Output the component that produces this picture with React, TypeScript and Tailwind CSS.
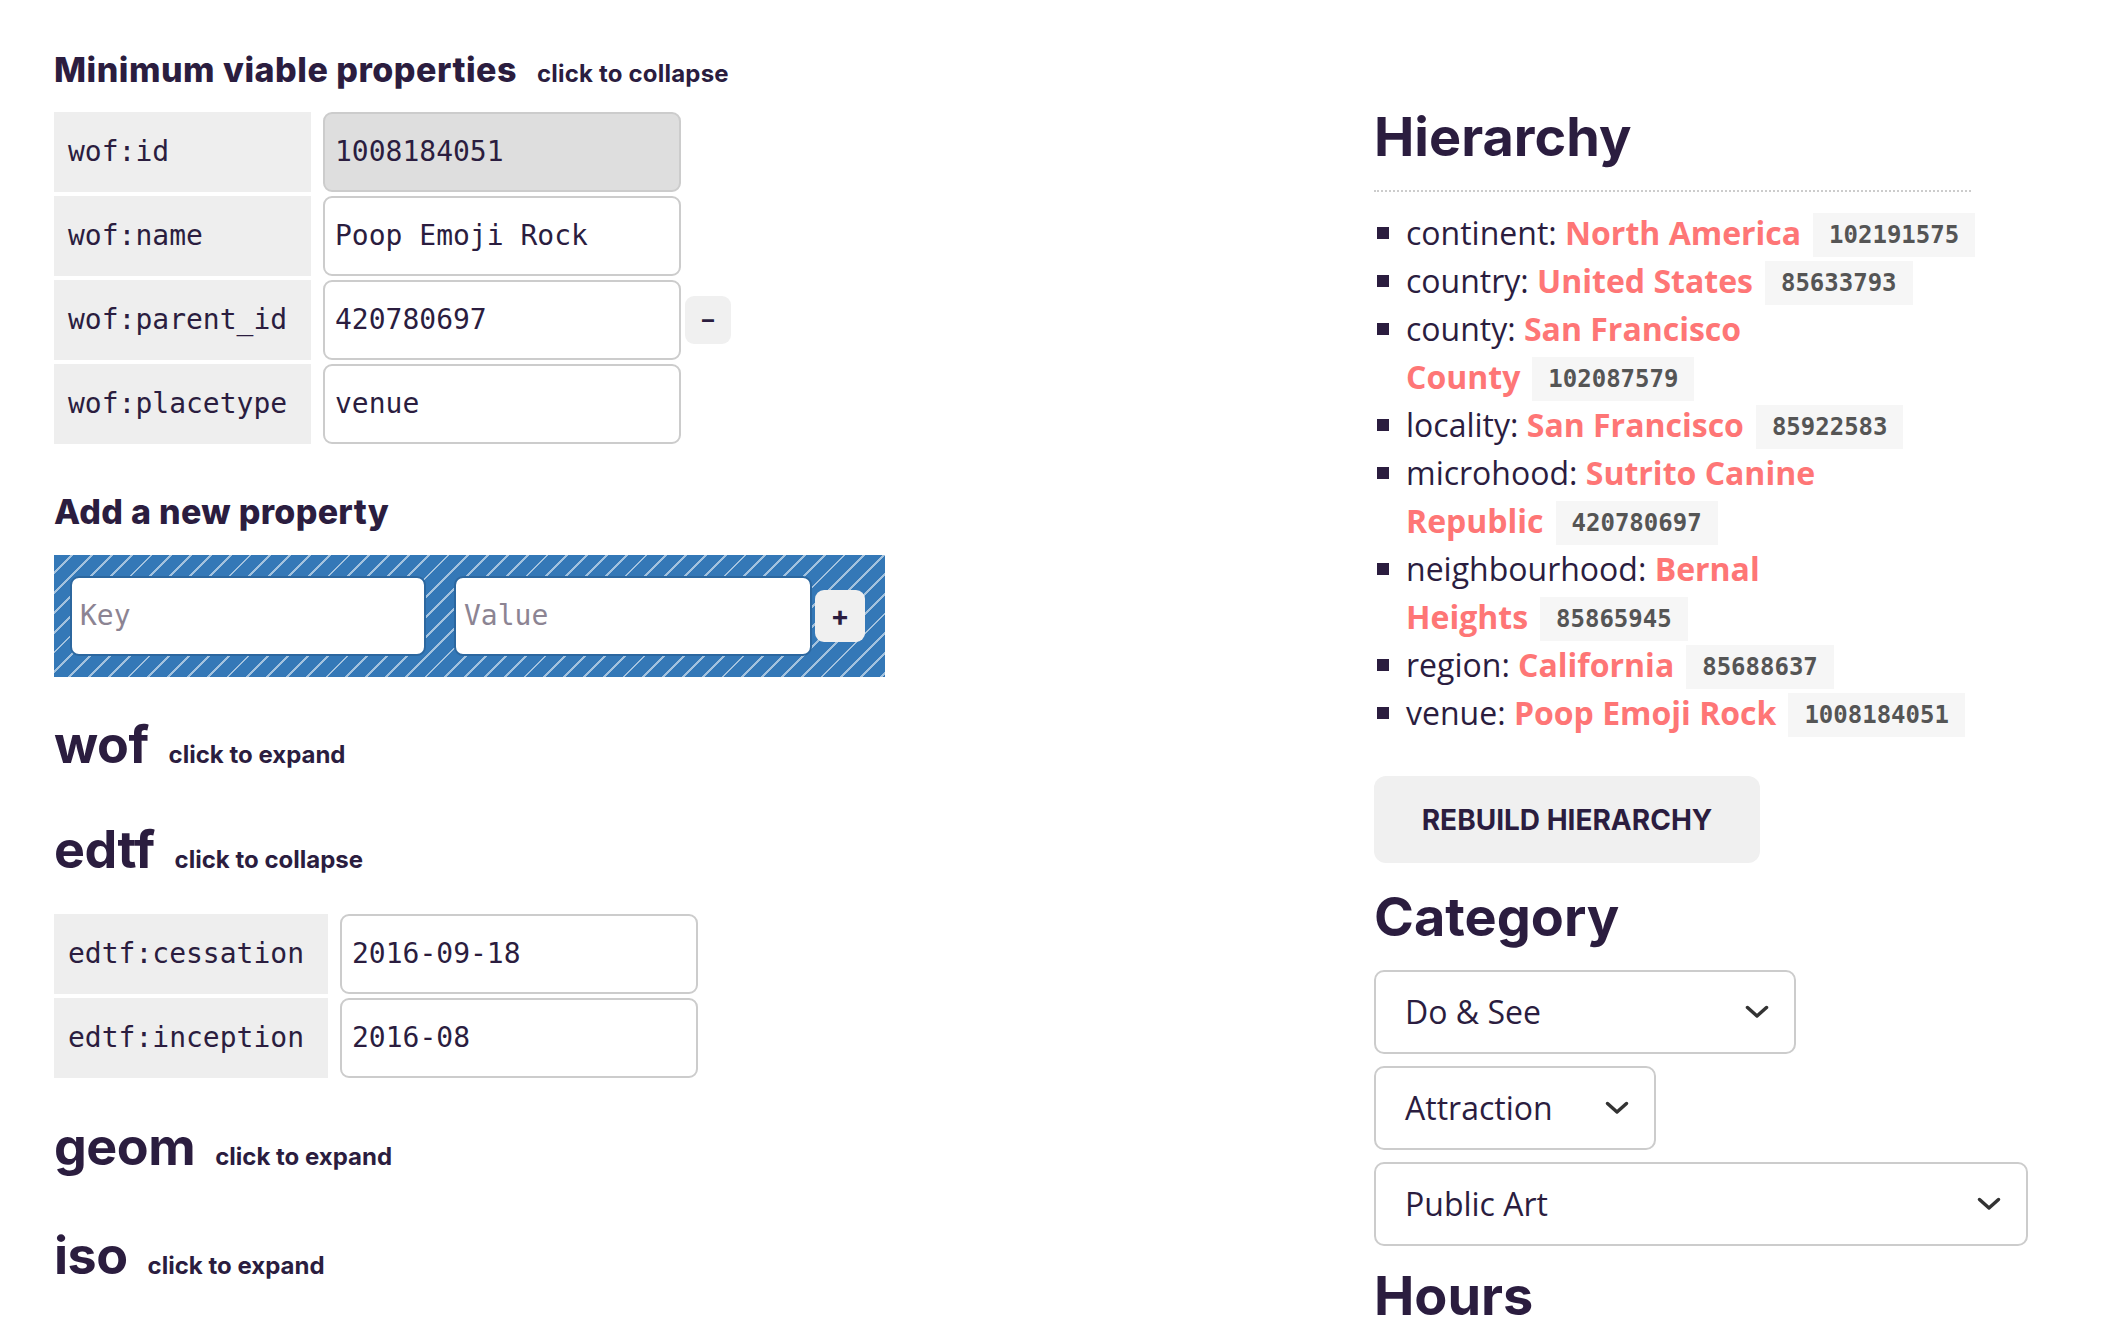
const ink = "text-[#2b1d3f]";

interface Place {
  type: string;
  name: string;
  id: string;
}

const hierarchy: Place[] = [
  { type: "continent", name: "North America", id: "102191575" },
  { type: "country", name: "United States", id: "85633793" },
  { type: "county", name: "San Francisco County", id: "102087579" },
  { type: "locality", name: "San Francisco", id: "85922583" },
  { type: "microhood", name: "Sutrito Canine Republic", id: "420780697" },
  { type: "neighbourhood", name: "Bernal Heights", id: "85865945" },
  { type: "region", name: "California", id: "85688637" },
  { type: "venue", name: "Poop Emoji Rock", id: "1008184051" },
];

const mono = "font-['DejaVu_Sans_Mono',monospace]";
const head = "font-['Inter',sans-serif] font-bold";
const body = "font-['Open_Sans',sans-serif]";

function PropRow({
  label,
  value,
  labelWidth,
  readOnly,
  action,
}: {
  label: string;
  value: string;
  labelWidth: string;
  readOnly?: boolean;
  action?: boolean;
}) {
  return (
    <div className="flex h-[80px] items-center">
      <div className={`flex h-full items-center bg-[#eeeeee] pl-[14px] text-[28px] ${mono} ${ink} ${labelWidth}`}>
        {label}
      </div>
      <div
        className={`ml-[12px] flex h-full w-[358px] items-center rounded-[9px] border-2 border-[#cccccc] pl-[10px] text-[28px] ${mono} ${ink} ${
          readOnly ? "bg-[#dedede]" : "bg-white"
        }`}
      >
        {value}
      </div>
      {action && (
        <button
          type="button"
          className={`ml-[4px] flex h-[48px] w-[46px] items-center justify-center rounded-[9px] bg-[#f0f0f0] text-[24px] ${head} ${ink}`}
        >
          –
        </button>
      )}
    </div>
  );
}

function SectionTitle({ title, hint, className }: { title: string; hint: string; className?: string }) {
  return (
    <div className={`flex items-baseline gap-[20px] ${ink} ${className ?? ""}`}>
      <h2 className={`text-[52px] leading-[64px] tracking-[-0.5px] ${head}`}>{title}</h2>
      <span className={`text-[24px] ${head}`}>{hint}</span>
    </div>
  );
}

function Chevron() {
  return (
    <svg width="24" height="14" viewBox="0 0 24 14" fill="none" className="shrink-0">
      <polyline
        points="2.5,2.5 12,11 21.5,2.5"
        stroke="#333333"
        strokeWidth="3.5"
        strokeLinecap="round"
        strokeLinejoin="round"
      />
    </svg>
  );
}

function Select({ value, width }: { value: string; width: string }) {
  return (
    <div
      className={`flex h-[84px] items-center justify-between rounded-[10px] border-2 border-[#cccccc] bg-white pl-[29px] pr-[25px] text-[32px] ${body} ${ink} ${width}`}
    >
      <span>{value}</span>
      <Chevron />
    </div>
  );
}

function HierarchyItem({ place }: { place: Place }) {
  const words = place.name.split(" ");
  const last = words.pop();
  const lead = words.join(" ");
  return (
    <li className="relative pl-[32px] before:absolute before:left-[3px] before:top-[18px] before:h-[12px] before:w-[12px] before:bg-[#2b1d3f]">
      {place.type}:{" "}
      <a className="font-bold text-[#fe7676]">
        {lead && `${lead} `}
        <span className="whitespace-nowrap">
          {last}
          <span
            className={`ml-[12px] inline-block h-[44px] bg-[#f6f6f6] px-[16px] align-bottom text-[24px] font-bold leading-[44px] text-[#555555] ${mono}`}
          >
            {place.id}
          </span>
        </span>
      </a>
    </li>
  );
}

export default function App() {
  return (
    <div className="flex min-h-[1338px] w-[2102px] bg-white">
      <div className="w-[1374px] shrink-0 pl-[54px] pt-[50px]">
        <div className={`flex items-baseline gap-[20px] ${ink}`}>
          <h1 className={`text-[34px] font-extrabold leading-[40px] tracking-[0.5px] ${head}`}>
            Minimum viable properties
          </h1>
          <span className={`text-[24px] tracking-[0.2px] ${head}`}>click to collapse</span>
        </div>

        <div className="mt-[20px] flex flex-col gap-[4px]">
          <PropRow label="wof:id" value="1008184051" labelWidth="w-[257px]" readOnly />
          <PropRow label="wof:name" value="Poop Emoji Rock" labelWidth="w-[257px]" />
          <PropRow label="wof:parent_id" value="420780697" labelWidth="w-[257px]" action />
          <PropRow label="wof:placetype" value="venue" labelWidth="w-[257px]" />
        </div>

        <h2 className={`mt-[48px] text-[34px] font-extrabold leading-[40px] tracking-[0.3px] ${head} ${ink}`}>
          Add a new property
        </h2>

        <div className="mt-[23px] flex h-[122px] w-[831px] items-center bg-[#3478b7] bg-[repeating-linear-gradient(135deg,#3478b7_0px,#3478b7_12px,#a3c2de_12px,#a3c2de_14px)] pl-[16px]">
          <div className={`flex h-[80px] w-[356px] items-center rounded-[9px] border-2 border-[#2c679f] bg-white pl-[8px] text-[28px] text-[#8c8493] ${mono}`}>
            Key
          </div>
          <div className={`ml-[28px] flex h-[80px] w-[358px] items-center rounded-[9px] border-2 border-[#2c679f] bg-white pl-[8px] text-[28px] text-[#8c8493] ${mono}`}>
            Value
          </div>
          <button
            type="button"
            className={`ml-[3px] flex h-[52px] w-[50px] items-center justify-center rounded-[9px] bg-[#f0f0f0] text-[28px] ${head} ${ink}`}
          >
            +
          </button>
        </div>

        <SectionTitle title="wof" hint="click to expand" className="mt-[36px]" />
        <SectionTitle title="edtf" hint="click to collapse" className="mt-[41px]" />

        <div className="mt-[32px] flex flex-col gap-[4px]">
          <PropRow label="edtf:cessation" value="2016-09-18" labelWidth="w-[274px]" />
          <PropRow label="edtf:inception" value="2016-08" labelWidth="w-[274px]" />
        </div>

        <SectionTitle title="geom" hint="click to expand" className="mt-[37px]" />
        <SectionTitle title="iso" hint="click to expand" className="mt-[45px]" />
      </div>

      <div className={`w-[654px] shrink-0 pt-[105px] ${ink}`}>
        <h2 className={`text-[54px] leading-[64px] ${head}`}>Hierarchy</h2>
        <div className="mt-[21px] w-[597px] border-b-2 border-dotted border-[#cccccc]" />

        <ul className={`mt-[17px] w-[610px] text-[32px] leading-[48px] ${body}`}>
          {hierarchy.map((place) => (
            <HierarchyItem key={place.type} place={place} />
          ))}
        </ul>

        <button
          type="button"
          className={`mt-[39px] h-[87px] w-[386px] rounded-[12px] bg-[#f0f0f0] text-[28px] uppercase ${head}`}
        >
          Rebuild hierarchy
        </button>

        <h2 className={`mt-[22px] text-[54px] leading-[64px] ${head}`}>Category</h2>

        <div className="mt-[21px] flex flex-col gap-[12px]">
          <Select value="Do & See" width="w-[422px]" />
          <Select value="Attraction" width="w-[282px]" />
          <Select value="Public Art" width="w-[654px]" />
        </div>

        <h2 className={`mt-[18px] text-[54px] leading-[64px] ${head}`}>Hours</h2>
      </div>
    </div>
  );
}
